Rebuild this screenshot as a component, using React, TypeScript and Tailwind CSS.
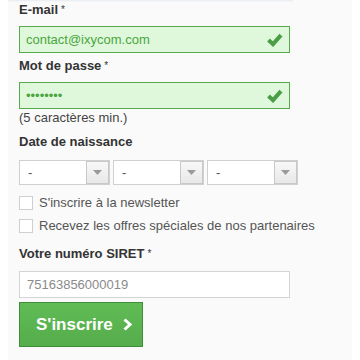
import React from "react";

const font = { fontFamily: '"Liberation Sans", Arial, sans-serif' };

const Check = () => (
  <svg width="17" height="15" viewBox="0 0 17 15" className="mr-[6px]">
    <path
      d="M2.5 8 L7 12.2 L15 3.2"
      fill="none"
      stroke="#4b9e45"
      strokeWidth="4"
      strokeLinejoin="miter"
    />
  </svg>
);

const Label = ({ text, className = "" }: { text: string; className?: string }) => (
  <div className={`text-[13px] leading-[15px] font-bold text-[#333] ${className}`}>
    {text}
    <sup className="text-[10px] font-normal ml-[3px] relative top-[-1px]">*</sup>
  </div>
);

const ValidInput = ({ children }: { children: React.ReactNode }) => (
  <div className="flex items-center justify-between w-[271px] h-[27px] border border-[#57aa4c] bg-[#dff8dc] pl-[6px] text-[13px] text-[#4aa53c]">
    {children}
    <Check />
  </div>
);

const Select = () => (
  <div className="flex items-stretch w-[91px] h-[25px] border border-[#d0d0d0] bg-white">
    <div className="flex-1 flex items-center pl-[8px] text-[13px] text-[#555]">-</div>
    <div className="w-[23px] flex items-center justify-center border border-[#c8c8c8] bg-gradient-to-b from-[#f8f8f8] to-[#e8e8e8]">
      <svg width="9" height="5" viewBox="0 0 9 5">
        <path d="M0 0 H9 L4.5 5 Z" fill="#9a9a9a" />
      </svg>
    </div>
  </div>
);

const CheckRow = ({ text }: { text: string }) => (
  <div className="flex items-center h-[23px]">
    <div className="w-[14px] h-[14px] border border-[#cfcfcf] bg-white" />
    <span className="ml-[6px] text-[13px] text-[#555]">{text}</span>
  </div>
);

export default function App() {
  return (
    <div className="w-[360px] h-[360px] bg-white overflow-hidden" style={font}>
      <div className="ml-[8px] w-[344px] h-full bg-[#fafafa] pl-[11px]">
        <div className="h-[2px] w-[285px] -ml-[11px] bg-gradient-to-b from-[#e6ebf0] to-[#fafafa]" />
        <Label text="E-mail" />
        <div className="mt-[9px]">
          <ValidInput>contact@ixycom.com</ValidInput>
        </div>
        <Label text="Mot de passe" className="mt-[5px]" />
        <div className="mt-[9px]">
          <ValidInput>
            <span className="text-[13px]">••••••••</span>
          </ValidInput>
        </div>
        <div className="mt-[1px] text-[13px] leading-[15px] text-[#444]">(5 caractères min.)</div>
        <div className="mt-[9px] text-[13px] leading-[15px] font-bold text-[#333]">Date de naissance</div>
        <div className="mt-[11px] flex gap-[3px]">
          <Select />
          <Select />
          <Select />
        </div>
        <div className="mt-[6px]">
          <CheckRow text="S'inscrire à la newsletter" />
          <CheckRow text="Recevez les offres spéciales de nos partenaires" />
        </div>
        <Label text="Votre numéro SIRET" className="mt-[9px]" />
        <div className="mt-[10px] flex items-center w-[271px] h-[27px] border border-[#d4d4d4] bg-white pl-[7px] text-[13px] text-[#8a8a8a]">
          75163856000019
        </div>
        <button className="mt-[4px] flex items-center w-[124px] h-[45px] border border-[#3f8d38] bg-gradient-to-b from-[#60bb55] to-[#55ad4b] pl-[16px] text-white text-[17px] font-bold">
          S'inscrire
          <svg width="9" height="13" viewBox="0 0 9 13" className="ml-[10px]">
            <path d="M1.5 1.5 L7 6.5 L1.5 11.5" fill="none" stroke="white" strokeWidth="3" />
          </svg>
        </button>
      </div>
    </div>
  );
}
